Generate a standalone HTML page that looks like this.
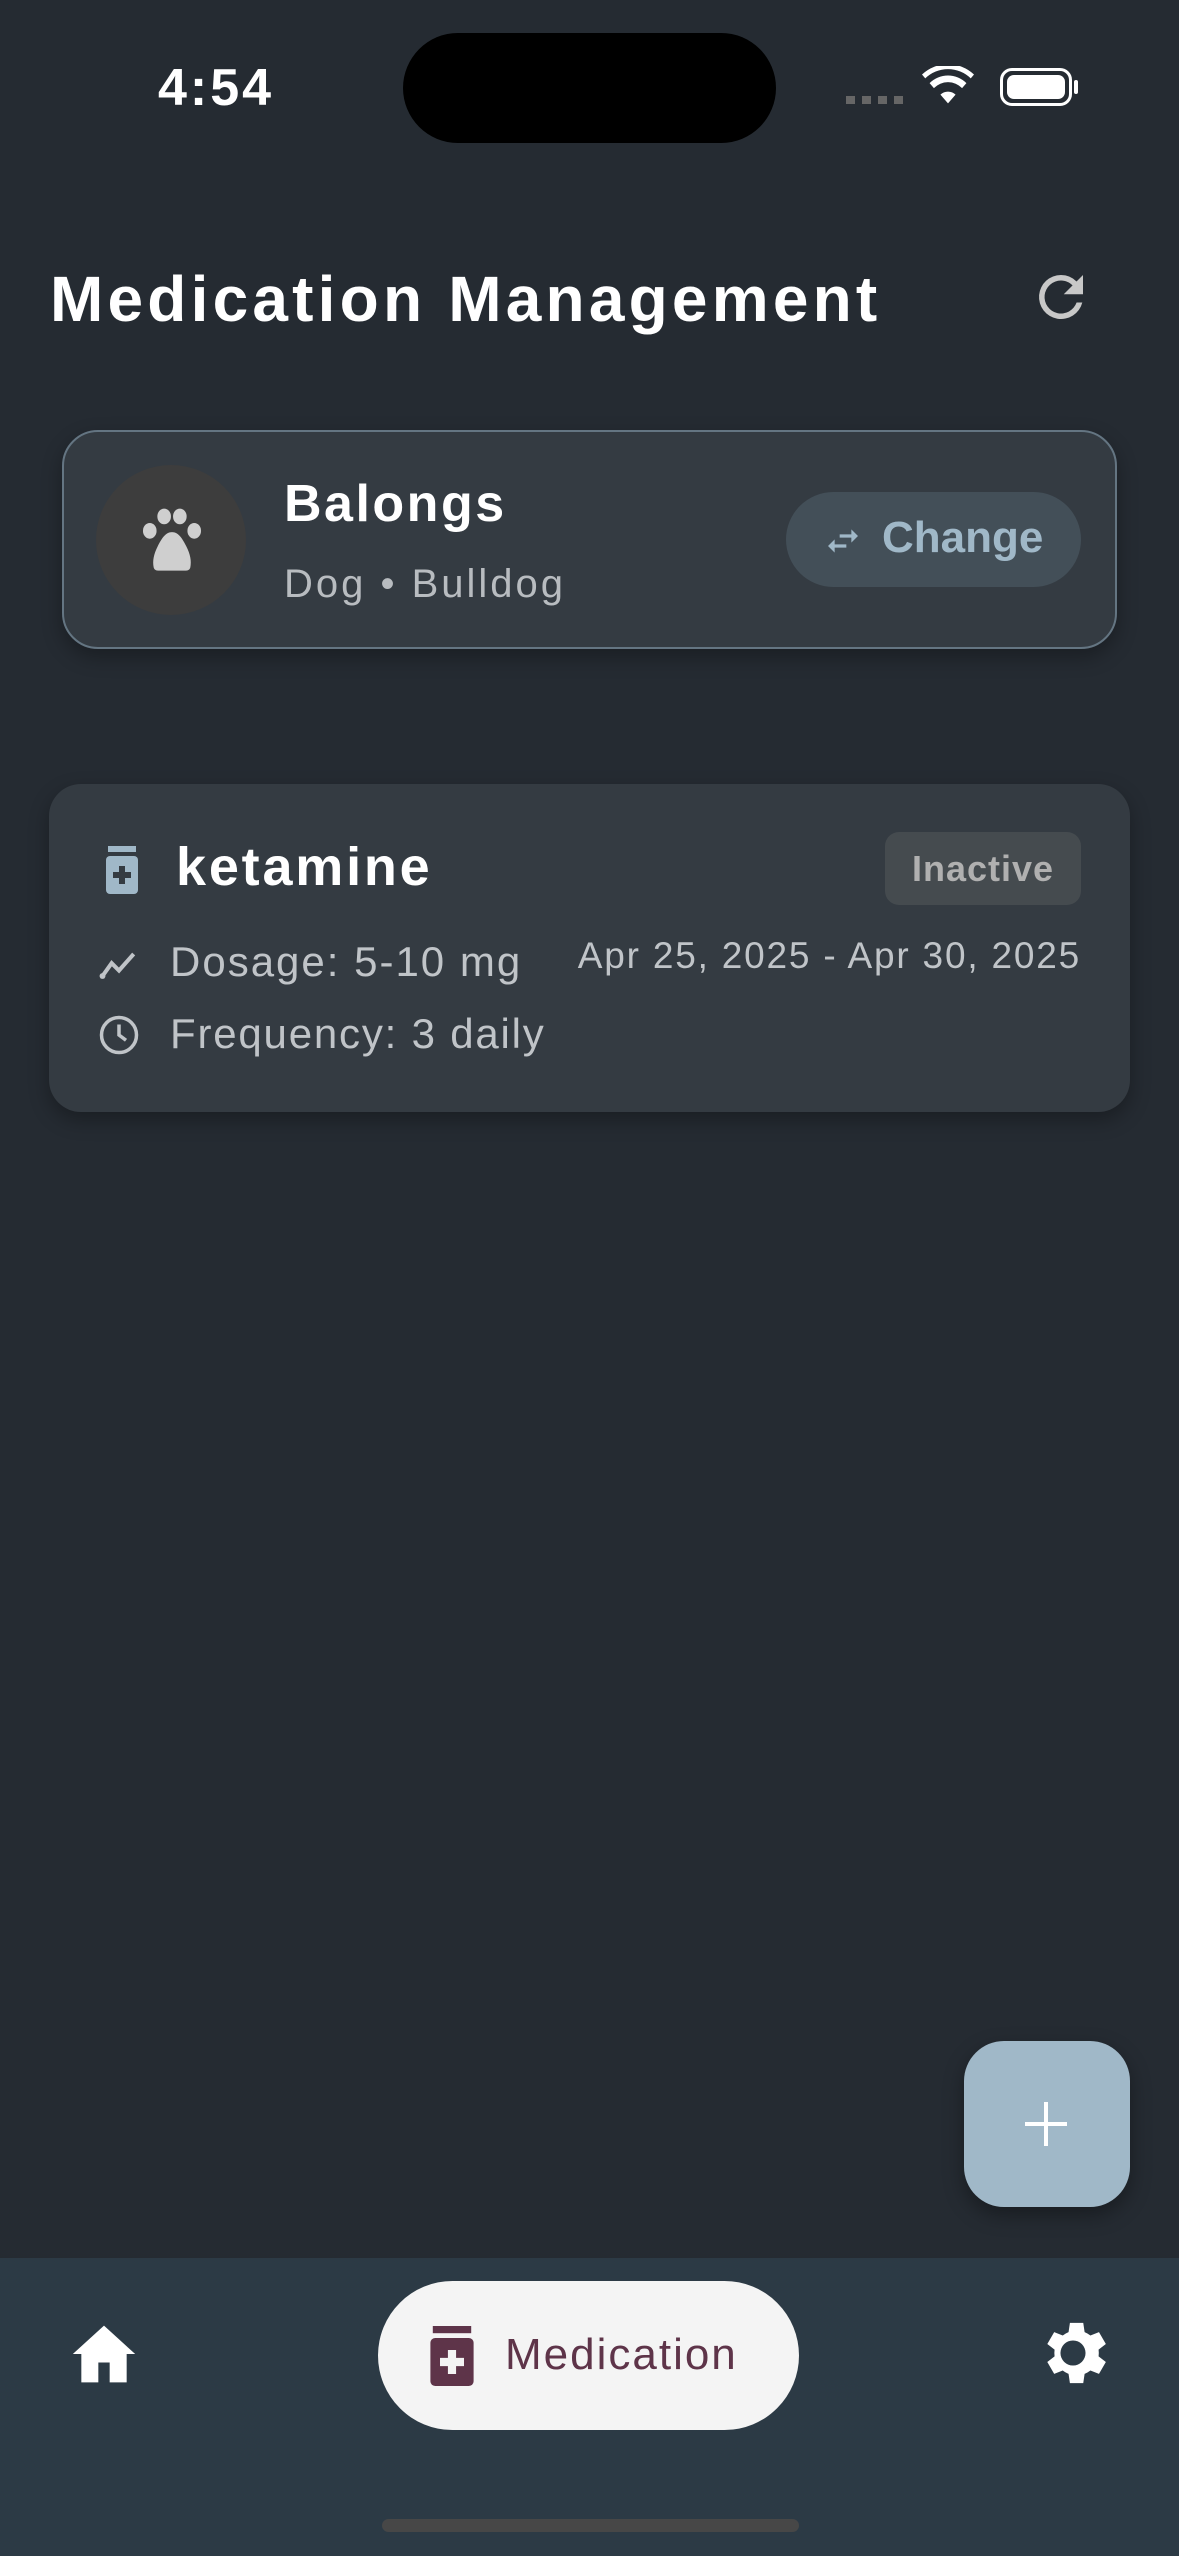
<!DOCTYPE html>
<html><head><meta charset="utf-8"><style>
*{margin:0;padding:0;box-sizing:border-box}
body{width:1179px;height:2556px;background:#252b32;font-family:"Liberation Sans",sans-serif;position:relative;overflow:hidden;color:#fff}
.a{position:absolute}
</style></head><body>
<div class="a" style="left:158px;top:58px;font-size:52px;font-weight:bold;letter-spacing:3px">4:54</div>
<div class="a" style="left:403px;top:33px;width:373px;height:110px;background:#000;border-radius:55px"></div>
<div class="a" style="left:846px;top:96px;width:60px;height:8px;background:repeating-linear-gradient(90deg,#666 0 9px,transparent 9px 16px)"></div>
<svg class="a" style="left:922px;top:66px" width="52" height="40" viewBox="0 0 24 18"><path d="M12 17l3.5-4a5 5 0 0 0-7 0zM5.5 10a9 9 0 0 1 13 0l2-2.3a12 12 0 0 0-17 0zM1.5 5.5a15 15 0 0 1 21 0l1.5-1.8a17.5 17.5 0 0 0-24 0z" fill="#fff"/></svg>
<div class="a" style="left:1000px;top:68px;width:72px;height:38px;border:3px solid #fff;border-radius:12px;padding:4px"><div style="width:100%;height:100%;background:#fff;border-radius:7px"></div></div>
<div class="a" style="left:1074px;top:80px;width:4px;height:14px;background:#fff;border-radius:2px"></div>

<div class="a" style="left:50px;top:262px;font-size:64px;font-weight:bold;letter-spacing:4.2px">Medication Management</div>
<svg class="a" style="left:1028px;top:264px" width="66" height="66" viewBox="0 0 24 24"><path d="M17.65 6.35A7.96 7.96 0 0 0 12 4a8 8 0 1 0 7.75 10h-2.08A6 6 0 1 1 12 6c1.66 0 3.14.69 4.22 1.78L13 11h7V4z" fill="#c8c8c8"/></svg>

<div class="a" style="left:62px;top:430px;width:1055px;height:219px;background:#343b42;border:2px solid #647582;border-radius:36px;box-shadow:0 8px 20px rgba(0,0,0,.3)"></div>
<div class="a" style="left:96px;top:465px;width:150px;height:150px;border-radius:50%;background:#3d3d3d"></div>
<svg class="a" style="left:140px;top:506px" width="64" height="68" viewBox="0 0 24 26" fill="#cfcfcf"><ellipse cx="3.5" cy="9.5" rx="2.6" ry="3"/><ellipse cx="9" cy="4" rx="2.6" ry="3"/><ellipse cx="15" cy="4" rx="2.6" ry="3"/><ellipse cx="20.5" cy="9.5" rx="2.6" ry="3"/><path d="M12 10c-2.5 0-4 2.5-5.5 5.5C5 18.5 4.5 21 5 23.5c.3 1 1 1.2 2 1.2h10c1 0 1.7-.2 2-1.2.5-2.5 0-5-1.5-8C16 12.5 14.5 10 12 10z"/></svg>
<div class="a" style="left:284px;top:474px;font-size:52px;font-weight:bold;letter-spacing:2.5px">Balongs</div>
<div class="a" style="left:284px;top:562px;font-size:40px;color:#b8bcc0;letter-spacing:3px">Dog • Bulldog</div>
<div class="a" style="left:786px;top:492px;width:295px;height:95px;border-radius:48px;background:#434f58"></div>
<svg class="a" style="left:823px;top:521px" width="40" height="40" viewBox="0 0 24 24" fill="#a0b8c8"><path d="M6.99 11L3 15l3.99 4v-3H14v-2H6.99v-3zM21 9l-3.99-4v3H10v2h7.01v3L21 9z"/></svg>
<div class="a" style="left:882px;top:513px;font-size:44px;font-weight:bold;color:#a0b8c8">Change</div>

<div class="a" style="left:49px;top:784px;width:1081px;height:328px;background:#343b42;border-radius:32px;box-shadow:0 8px 20px rgba(0,0,0,.3)"></div>
<svg class="a" style="left:102px;top:846px" width="40" height="48" viewBox="0 0 20 24"><rect x="3" y="0" width="14" height="3" fill="#a0b8c8"/><rect x="2" y="5" width="16" height="19" rx="2" fill="#a0b8c8"/><path d="M8.5 10h3v3h3v3h-3v3h-3v-3h-3v-3h3z" fill="#343b42"/></svg>
<div class="a" style="left:176px;top:836px;font-size:54px;font-weight:bold;letter-spacing:2.8px">ketamine</div>
<div class="a" style="left:885px;top:832px;width:196px;height:73px;border-radius:14px;background:#454b4f;font-size:36px;font-weight:bold;color:#b0b0b0;text-align:center;line-height:73px;letter-spacing:1px">Inactive</div>
<svg class="a" style="left:97px;top:943px" width="44" height="44" viewBox="0 0 24 24"><path d="M3 18l5-7 4 4 8-9" stroke="#c0c4c8" stroke-width="2.2" fill="none"/><circle cx="3" cy="18" r="1.6" fill="#c0c4c8"/></svg>
<div class="a" style="left:170px;top:938px;font-size:42px;color:#c0c4c8;letter-spacing:2px">Dosage: 5-10 mg</div>
<div class="a" style="left:540px;top:935px;width:541px;text-align:right;font-size:37px;color:#c0c4c8;letter-spacing:1.8px">Apr 25, 2025 - Apr 30, 2025</div>
<svg class="a" style="left:98px;top:1014px" width="42" height="42" viewBox="0 0 24 24"><circle cx="12" cy="12" r="10" stroke="#c0c4c8" stroke-width="2" fill="none"/><path d="M12 6v6l4 3" stroke="#c0c4c8" stroke-width="2" fill="none"/></svg>
<div class="a" style="left:170px;top:1010px;font-size:42px;color:#c0c4c8;letter-spacing:1.8px">Frequency: 3 daily</div>

<div class="a" style="left:964px;top:2041px;width:166px;height:166px;border-radius:40px;background:#a0b8c8;box-shadow:0 8px 20px rgba(0,0,0,.35)"></div>
<div class="a" style="left:1044px;top:2102px;width:4px;height:44px;background:#fff"></div>
<div class="a" style="left:1025px;top:2122px;width:42px;height:4px;background:#fff"></div>

<div class="a" style="left:0;top:2258px;width:1179px;height:298px;background:#2c3a45"></div>
<svg class="a" style="left:70px;top:2322px" width="68" height="64" viewBox="0 0 24 22"><path d="M12 1L1 11h3v10h6v-7h4v7h6V11h3z" fill="#fff"/></svg>
<div class="a" style="left:378px;top:2281px;width:421px;height:149px;border-radius:75px;background:#f4f4f4"></div>
<svg class="a" style="left:428px;top:2326px" width="48" height="60" viewBox="0 0 20 25"><rect x="2" y="0" width="16" height="3" fill="#5e3449"/><rect x="1" y="5" width="18" height="20" rx="2" fill="#5e3449"/><path d="M8.3 10h3.4v3.3H15v3.4h-3.3V20H8.3v-3.3H5v-3.4h3.3z" fill="#f4f4f4"/></svg>
<div class="a" style="left:505px;top:2330px;font-size:44px;color:#5e3449;letter-spacing:2px">Medication</div>
<svg class="a" style="left:1030px;top:2310px" width="86" height="86" viewBox="0 0 24 24"><path d="M19.14 12.94a7.07 7.07 0 0 0 0-1.88l2.03-1.58-1.92-3.32-2.39.96a7 7 0 0 0-1.62-.94L14.86 3.6h-3.72l-.38 2.58a7 7 0 0 0-1.62.94l-2.39-.96-1.92 3.32 2.03 1.58a7.07 7.07 0 0 0 0 1.880l-2.03 1.58 1.92 3.32 2.39-.96c.5.38 1.04.7 1.62.94l.38 2.58h3.72l.38-2.58a7 7 0 0 0 1.620-.94l2.39.96 1.92-3.32zM12 15.5A3.5 3.5 0 1 1 12 8.5a3.5 3.5 0 0 1 0 7z" fill="#fff"/></svg>
<div class="a" style="left:382px;top:2519px;width:417px;height:13px;border-radius:7px;background:#474747"></div>
</body></html>
